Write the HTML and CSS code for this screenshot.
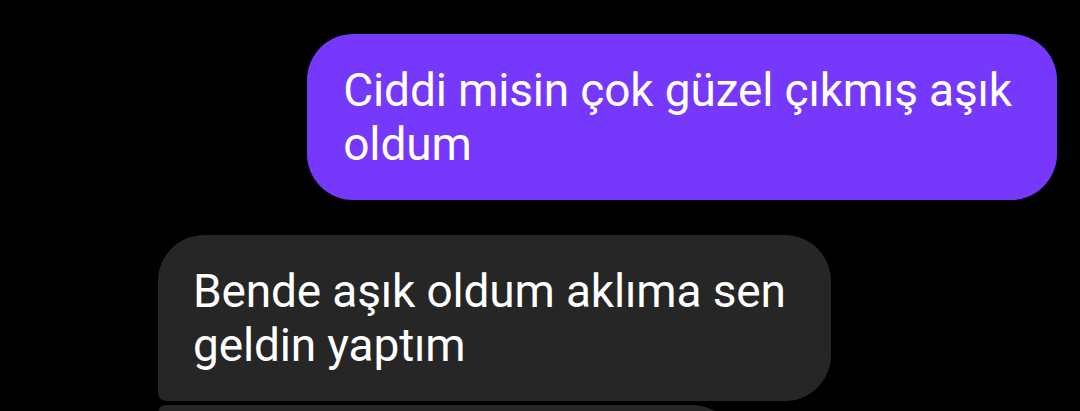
FILE: index.html
```html
<!DOCTYPE html>
<html lang="tr">

<head>
    <meta charset="UTF-8">
    <meta name="viewport" content="width=device-width, initial-scale=1.0">
    <title>Sohbet</title>
    <link rel="stylesheet" href="styles.css">
</head>

<body>
    <div class="thread">
        <div class="row row-out">
            <div class="bubble bubble-out">Ciddi misin çok güzel çıkmış aşık<br>oldum</div>
        </div>

        <div class="group">
            <div class="row row-in">
                <div class="bubble bubble-in first">Bende aşık oldum aklıma sen<br>geldin yaptım</div>
            </div>
            <!-- sıradaki mesaj, ekranın altında kalıyor -->
            <div class="row row-in">
                <div class="bubble bubble-in next"></div>
            </div>
        </div>
    </div>
</body>

</html>
```

FILE: styles.css
```css
/* sohbet ekranı */
body {
    margin: 0;
    background: #000;
    font-family: Roboto, "Noto Sans", sans-serif;
    color: #fff;
    overflow: hidden;
}

.thread {
    display: flex;
    flex-direction: column;
    gap: 35px;
    padding: 34px 23px 0 158px;
}

.group {
    display: flex;
    flex-direction: column;
    gap: 4px;
}

.row {
    display: flex;
}

.row-out {
    justify-content: flex-end;
}

.row-in {
    justify-content: flex-start;
}

/* mesaj balonu */
.bubble {
    font-size: 46px;
    line-height: 54px;
    letter-spacing: -0.15px;
    padding: 29px 45px 29px 36px;
    white-space: nowrap;
}

.bubble-out {
    background: #7638fa;
    border-radius: 46px;
}

.bubble-in {
    background: #262626;
    padding-left: 35px;
}

.bubble-in.first {
    border-radius: 46px 46px 46px 8px;
}

.bubble-in.next {
    width: 580px;
    height: 110px;
    padding: 0;
    border-radius: 8px 46px 46px 46px;
}
```
